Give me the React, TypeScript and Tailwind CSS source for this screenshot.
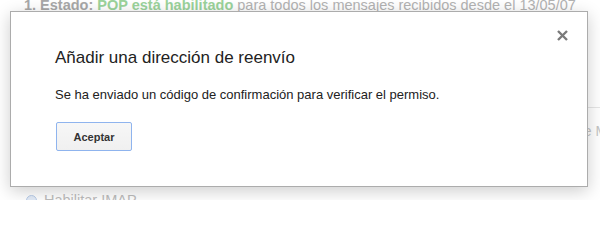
import React from 'react';

const CloseIcon = () => (
	<svg width="11" height="11" viewBox="0 0 11 11" className="block">
		<path d="M1 1 L10 10 M10 1 L1 10" stroke="#7a7a7a" strokeWidth="2.4" strokeLinecap="butt" />
	</svg>
);

export default function App() {
	return (
		<div className="relative h-[200px] w-[600px] overflow-hidden bg-white font-['Liberation_Sans',Arial,sans-serif] text-[13px] leading-[16px]">
			{/* Settings page behind the dialog */}
			<div className="-mt-[3px] whitespace-nowrap pl-[24px] text-[14.5px] text-[#b3b3b3]">
				<span className="font-bold text-[#a8a8a8]">1. Estado: </span>
				<span className="font-bold text-[#9bd39b]">POP está habilitado</span>
				<span> para todos los mensajes recibidos desde el 13/05/07</span>
			</div>
			<div className="ml-auto mt-[94px] w-[30px] border-t border-[#e6e6e6]" />
			<div className="mt-[15px] whitespace-nowrap pl-[576px] text-[14px] text-[#c4c4c4]">de Mail</div>
			<div className="mt-[36px] whitespace-nowrap pl-[25px] font-bold text-[#c8c8c8]">2. Estado: IMAP está inhabilitado</div>
			<div className="mt-[1px] flex items-center gap-[7px] pl-[26px] text-[#bdbdbd]">
				<span className="h-[11px] w-[11px] rounded-full border border-[#b9cdea] bg-[#e3ecf8]" />
				<span className="text-[14.5px]">Habilitar IMAP</span>
			</div>

			{/* Dialog */}
			<div className="absolute left-[10px] top-[11px] h-[176px] w-[578px] border border-[#acacac] bg-white pl-[44px] pt-[36px] shadow-[0_4px_16px_rgba(0,0,0,0.2)]">
				<button className="absolute right-[19px] top-[18px]">
					<CloseIcon />
				</button>
				<h2 className="text-[17px] leading-[20px] text-[#222]">Añadir una dirección de reenvío</h2>
				<p className="mt-[19px] text-[13px] leading-[16px] text-[#222]">
					Se ha enviado un código de confirmación para verificar el permiso.
				</p>
				<button className="mt-[19px] ml-[1px] h-[29px] w-[76px] rounded-[2px] border border-[#8fb4ee] bg-gradient-to-b from-[#f7f7f7] to-[#f0f0f0] text-[11px] font-bold text-[#333]">
					Aceptar
				</button>
			</div>
		</div>
	);
}
